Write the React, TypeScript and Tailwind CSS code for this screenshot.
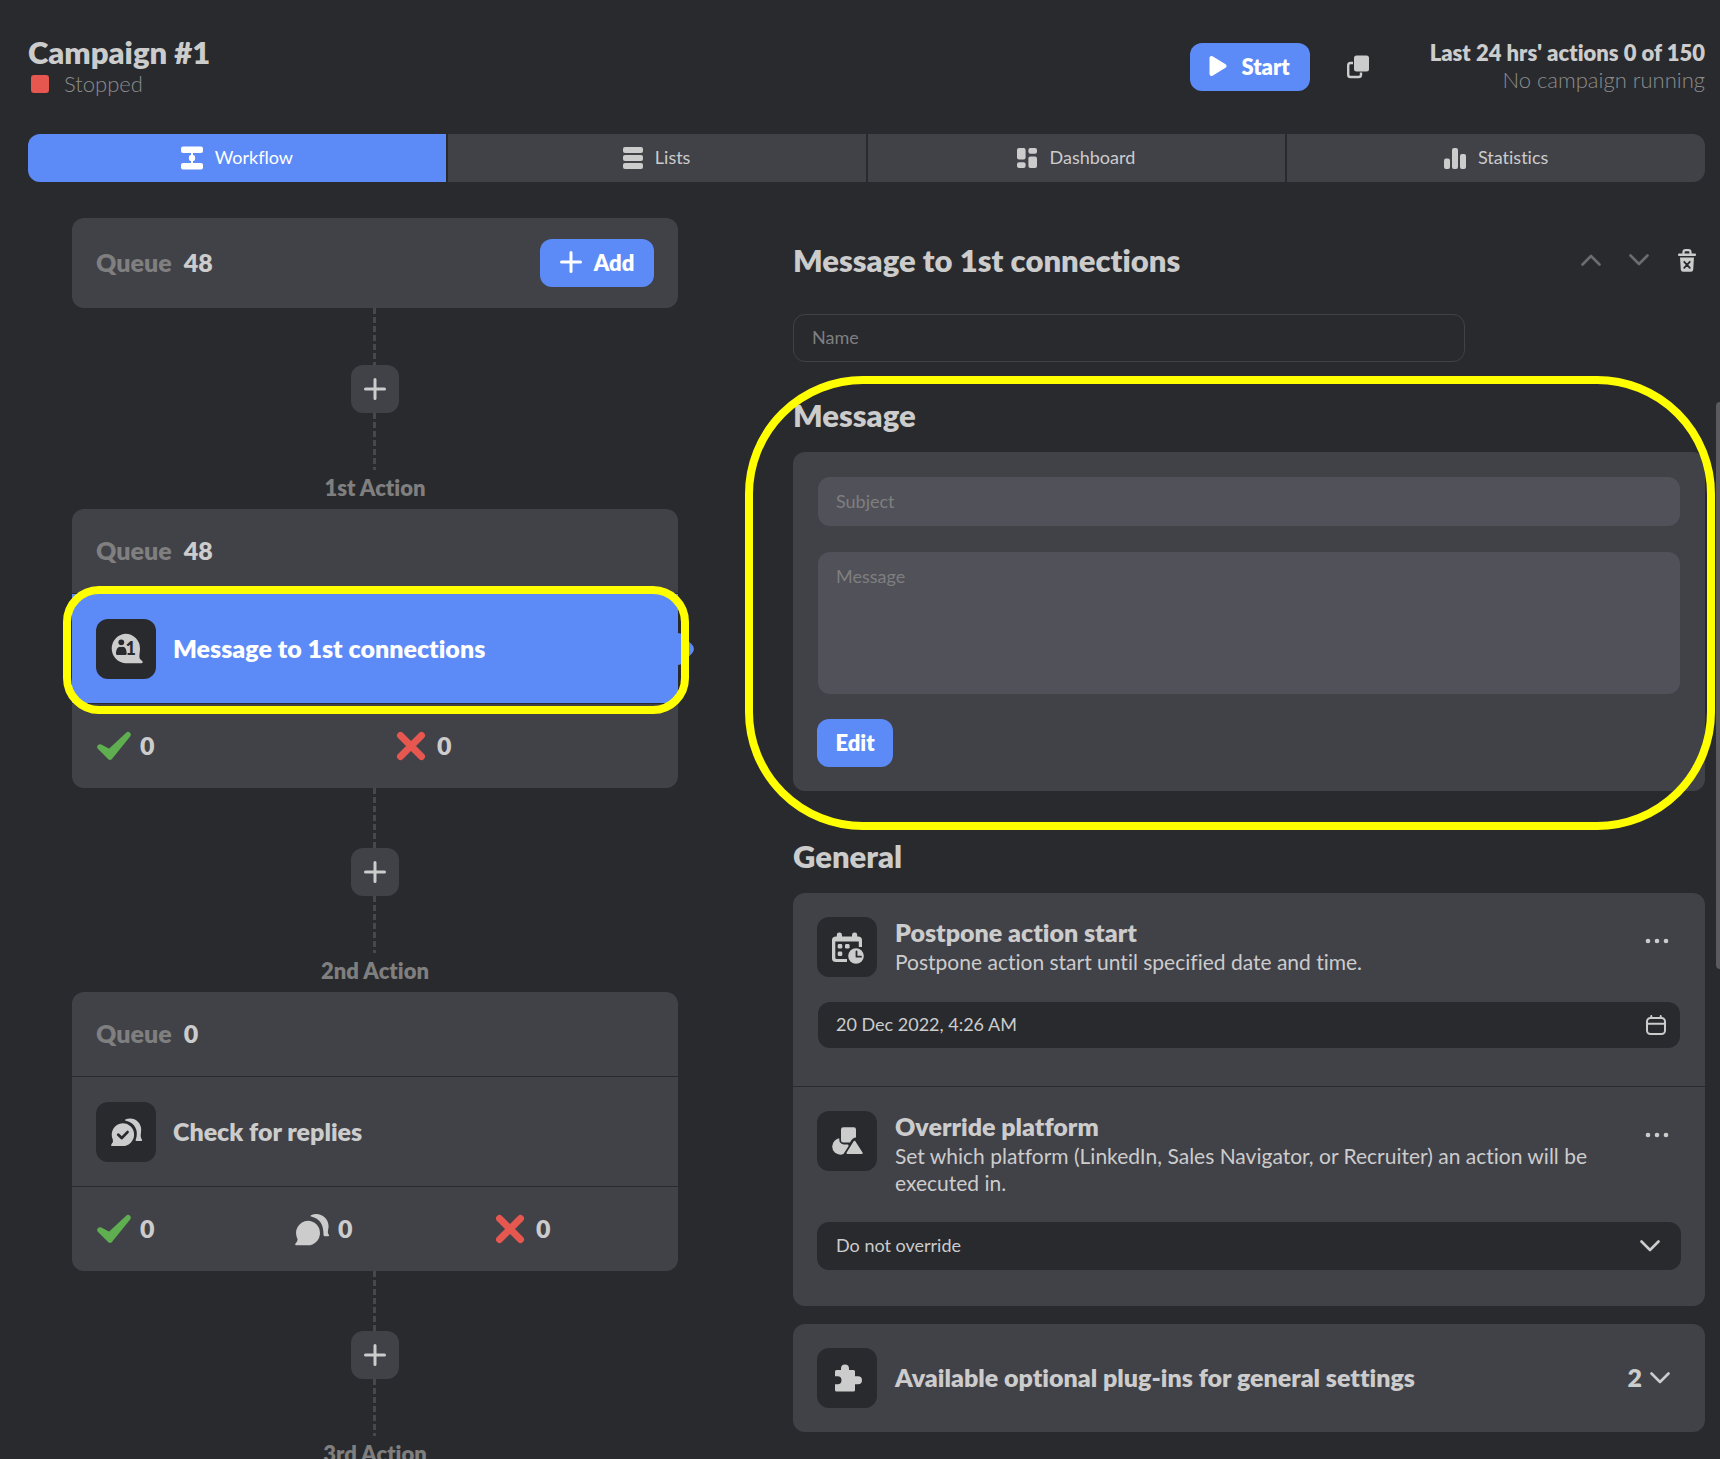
import React from "react";

type IconProps = { className?: string };

const PlusIcon = ({ className = "" }: IconProps) => (
  <svg viewBox="0 0 22 22" className={`size-[22px] shrink-0 ${className}`} fill="none" stroke="currentColor" strokeWidth="3" strokeLinecap="round" aria-hidden>
    <path d="M11 1.5v19M1.5 11h19" />
  </svg>
);

const ChevronIcon = ({ className = "" }: IconProps) => (
  <svg viewBox="0 0 20 12" className={`h-3 w-5 shrink-0 ${className}`} fill="none" stroke="currentColor" strokeWidth="2.6" strokeLinecap="round" strokeLinejoin="round" aria-hidden>
    <path d="M1.5 1.5l8.500 8.500 8.500-8.500" />
  </svg>
);

const WorkflowIcon = () => (
  <svg viewBox="0 0 22 24" className="h-6 w-[22px]" fill="currentColor" aria-hidden>
    <rect x="0" y="0.500" width="22" height="6.500" rx="2" />
    <rect x="0" y="17" width="22" height="6.500" rx="2" />
    <rect x="10" y="6" width="2" height="12" />
    <circle cx="11" cy="12" r="3.200" />
  </svg>
);

const ListsIcon = () => (
  <svg viewBox="0 0 20 22" className="h-[22px] w-5" fill="currentColor" aria-hidden>
    <rect y="0" width="20" height="6" rx="2" />
    <rect y="8" width="20" height="6" rx="2" />
    <rect y="16" width="20" height="6" rx="2" />
  </svg>
);

const DashboardIcon = () => (
  <svg viewBox="0 0 20 20" className="size-5" fill="currentColor" aria-hidden>
    <rect x="0" y="0" width="8.600" height="11.400" rx="2" />
    <rect x="0" y="14.200" width="8.600" height="5.800" rx="2" />
    <rect x="11.400" y="0" width="8.600" height="5.800" rx="2" />
    <rect x="11.400" y="8.600" width="8.600" height="11.400" rx="2" />
  </svg>
);

const StatisticsIcon = () => (
  <svg viewBox="0 0 22 21" className="h-[21px] w-[22px]" fill="currentColor" aria-hidden>
    <rect x="0" y="10.500" width="6" height="10.500" rx="2" />
    <rect x="8" y="0" width="6" height="21" rx="2" />
    <rect x="16" y="6" width="6" height="15" rx="2" />
  </svg>
);

const CopyIcon = () => (
  <svg viewBox="0 0 22 24" className="h-6 w-[22px]" aria-hidden>
    <path d="M6 8H3.500Q1.200 8 1.200 10.300V19.700Q1.200 22 3.500 22H11.500Q14 22 14 19.700V17.500" fill="none" stroke="currentColor" strokeWidth="2.400" />
    <rect x="7" y="0.500" width="15" height="16" rx="2.500" fill="currentColor" />
  </svg>
);

const TrashIcon = () => (
  <svg viewBox="0 0 18 23" className="h-[23px] w-[18px]" aria-hidden>
    <rect x="0" y="4.500" width="18" height="2.400" rx="1" fill="currentColor" />
    <path d="M5.500 5V3.200Q5.500 1.200 7.500 1.200h3Q12.500 1.200 12.500 3.200V5" fill="none" stroke="currentColor" strokeWidth="2.200" />
    <path d="M2 8.500H16L15.200 20.600Q15 22.800 13 22.800H5Q3 22.800 2.800 20.600Z" fill="currentColor" />
    <path d="M6.200 12.800l5.600 6M11.800 12.800l-5.600 6" stroke="#292a2e" strokeWidth="1.800" strokeLinecap="round" />
  </svg>
);

const CheckIcon = () => (
  <svg viewBox="0 0 36 30" className="h-[30px] w-9 text-[#5fae50]" fill="currentColor" stroke="currentColor" strokeWidth="5.500" strokeLinejoin="round" aria-label="Succeeded" role="img">
    <path d="M4 16l9.500 5L32 3.700 14 26Z" />
  </svg>
);

const CrossIcon = () => (
  <svg viewBox="0 0 36 30" className="h-[30px] w-9 text-[#e5574f]" fill="none" stroke="currentColor" strokeLinecap="round" aria-label="Failed" role="img">
    <path d="M7.500 4.500l21 21M28.500 4.500l-21 21" strokeWidth="7" />
  </svg>
);

const RepliesIcon = () => (
  <svg viewBox="0 0 36 34" className="h-[34px] w-9" fill="currentColor" aria-label="Replied" role="img">
    <path d="M13.700 8.700a12.200 12.200 0 1 1 0 24.600H2.200Q0.500 33.300 1.500 31.500Q4.300 29 3.300 26.500A12.400 12.400 0 0 1 13.700 8.700Z" />
    <path d="M17 3.200C25 -0.500 34.600 5 34.600 14.300C34.600 17.500 33 20 34.500 22.200Q36 24.200 34 24.200H30.500Q29.500 24.200 29.500 22.500C29.500 12.500 26 6.500 17 4.500Q16 4 17 3.200Z" />
  </svg>
);

const MessageFirstIcon = () => (
  <svg viewBox="0 0 60 60" className="size-[60px]" fill="currentColor" aria-hidden>
    <path d="M29.300 14.700A14.800 14.800 0 0 1 44 29.500C44 34 42.400 38.500 44.500 40.600L46.500 42.300Q47.300 44.200 45.500 44.200H29.300A14.800 14.800 0 0 1 29.300 14.700Z" />
    <g fill="#292a2e">
      <circle cx="25.300" cy="23.300" r="2.900" />
      <path d="M20 34.500C20 30 22 28 24 27.700Q25.300 28.500 26.700 27.700C29 28 30.700 30 30.700 34.500Q30.700 36 29.200 36H21.500Q20 36 20 34.500Z" />
      <text x="29.500" y="35.600" fontSize="18" fontWeight="900" fontFamily="Lato, sans-serif">1</text>
    </g>
  </svg>
);

const CheckRepliesIcon = () => (
  <svg viewBox="0 0 60 60" className="size-[60px]" fill="currentColor" aria-hidden>
    <path d="M26.700 21.200a11.400 11.400 0 1 1 0 22.800H16Q14.500 44 15.300 42.400Q17.800 40 16.800 37.500A11.400 11.400 0 0 1 26.700 21.200Z" />
    <path d="M29.300 17.500C37 14 45.200 19.500 45.200 27.500C45.200 31 44 34 45.300 36.500Q47 39 45.300 39H40.200Q39.200 39 39.800 37.500C43 29 39 20.500 30 18.700Q28 18.500 29.300 17.500Z" />
    <path d="M22.300 32.800l3.400 3.300 5.800-6" fill="none" stroke="#292a2e" strokeWidth="2.800" strokeLinecap="round" strokeLinejoin="round" />
  </svg>
);

const CalendarClockIcon = () => (
  <svg viewBox="0 0 60 60" className="size-[60px]" fill="currentColor" aria-hidden>
    <path d="M19 19.500H41Q45 19.500 45 23V30H41.800V24.500H18.300V40.500Q18.300 42 19.800 42H30V45H19Q15 45 15 41.500V23Q15 19.500 19 19.500Z" />
    <rect x="19.800" y="15.500" width="5.200" height="7" rx="2.400" />
    <rect x="35" y="15.500" width="5.200" height="7" rx="2.400" />
    <rect x="20.700" y="27" width="4.600" height="4.600" rx="1.400" />
    <rect x="28" y="27" width="4.600" height="4.600" rx="1.400" />
    <rect x="20.700" y="34.500" width="4.600" height="4.600" rx="1.400" />
    <circle cx="39" cy="39" r="9.200" fill="#292a2e" />
    <circle cx="39" cy="39" r="7.800" />
    <path d="M39.500 34.500V39.700H44" fill="none" stroke="#292a2e" strokeWidth="1.800" strokeLinecap="round" strokeLinejoin="round" />
  </svg>
);

const ShapesIcon = () => (
  <svg viewBox="0 0 60 60" className="size-[60px]" fill="currentColor" aria-hidden>
    <circle cx="23.500" cy="35.500" r="8.300" />
    <path d="M37.500 30.500l8.600 13.300h-17.200z" stroke="#292a2e" strokeWidth="5" strokeLinejoin="round" fill="#292a2e" />
    <rect x="22.300" y="14.700" width="18.300" height="18.700" rx="4.500" fill="#292a2e" />
    <path d="M37.500 30.700l7.200 11.400h-14.200z" stroke="currentColor" strokeWidth="2" strokeLinejoin="round" />
    <path d="M26.300 16.300H36.800Q39 16.300 39 18.500V26.500Q35.500 26.500 33 31.500H26.300Q24 31.500 24 29.300V18.500Q24 16.300 26.300 16.300Z" />
  </svg>
);

const PuzzleIcon = () => (
  <svg viewBox="0 0 60 60" className="size-[60px]" fill="currentColor" aria-hidden>
    <path d="M19.500 22H24V20.500A4 4 0 0 1 32 20.500V22H36.500Q38 22 38 23.500V28.300H41A3.900 3.900 0 0 1 41 36.300H38V42Q38 43.500 36.500 43.500H19.500Q18 43.500 18 42V36.300H20.500A3.900 3.900 0 0 0 20.500 28.300H18V23.500Q18 22 19.500 22Z" />
  </svg>
);

const CalendarIcon = () => (
  <svg viewBox="0 0 20 20" className="size-5" fill="none" stroke="currentColor" strokeWidth="2" strokeLinecap="round" aria-hidden>
    <rect x="1" y="3" width="18" height="16" rx="3.500" />
    <path d="M1 8.700h18M5.300 1v2M14.700 1v2" />
  </svg>
);

const DotsIcon = () => (
  <svg viewBox="0 0 24 6" className="h-1.5 w-6" fill="currentColor" aria-hidden>
    <circle cx="3" cy="3" r="2.300" />
    <circle cx="12" cy="3" r="2.300" />
    <circle cx="21" cy="3" r="2.300" />
  </svg>
);

const IconTile = ({ children }: { children: React.ReactNode }) => (
  <span className="flex size-[60px] shrink-0 items-center justify-center overflow-hidden rounded-xl bg-[#292a2e] text-[#cccccc]">{children}</span>
);

const dashes =
  "mr-px w-[3px] bg-[repeating-linear-gradient(to_bottom,#47474d_0px,#47474d_6px,transparent_6px,transparent_9px)]";

const Connector = ({ label, first = false }: { label: string; first?: boolean }) => (
  <div className="flex flex-col items-center">
    <div className={`${first ? "h-[57px]" : "h-[60px]"} ${dashes}`} />
    <button type="button" aria-label={`Add step before ${label}`} className="flex size-12 items-center justify-center rounded-xl bg-[#414148]">
      <PlusIcon />
    </button>
    <div className={`h-[57px] ${dashes}`} />
    <h3 className="h-[39px] text-[22px] leading-9 font-extrabold text-[#7f7f7f]">{label}</h3>
  </div>
);

const Queue = ({ count }: { count: number }) => (
  <p className="flex gap-3 text-[25px] font-extrabold">
    <span className="text-[#7f7f7f]">Queue</span>
    <span>{count}</span>
  </p>
);

const Stat = ({ icon, value }: { icon: React.ReactNode; value: number }) => (
  <div className="flex items-center gap-2 text-[25px] font-extrabold">
    {icon}
    <span>{value}</span>
  </div>
);

const tabs = [
  { label: "Workflow", icon: <WorkflowIcon />, active: true },
  { label: "Lists", icon: <ListsIcon />, active: false },
  { label: "Dashboard", icon: <DashboardIcon />, active: false },
  { label: "Statistics", icon: <StatisticsIcon />, active: false },
];

const Header = () => (
  <header className="flex items-start justify-between pt-[35px]">
    <div>
      <h1 className="text-[31px] leading-[35px] font-extrabold">Campaign #1</h1>
      <p className="flex items-center gap-[15px] pl-[3px] text-[22px] leading-7 font-light text-[#8c8c8c]">
        <span className="size-[18px] rounded-[3px] bg-[#e5574f]" />
        Stopped
      </p>
    </div>
    <div className="flex">
      <button type="button" className="mt-2 flex h-12 w-[120px] items-center justify-center gap-3.5 rounded-xl bg-[#5c8af7] pb-0.5 text-[22px] font-extrabold text-white">
        <svg viewBox="0 0 18 22" className="h-[22px] w-[18px]" fill="currentColor" stroke="currentColor" strokeWidth="4" strokeLinejoin="round" aria-hidden>
          <path d="M2.500 3v16L15.500 11Z" />
        </svg>
        Start
      </button>
      <button type="button" aria-label="Duplicate campaign" className="mt-2 ml-6 flex size-12 items-center justify-center">
        <CopyIcon />
      </button>
      <div className="ml-12 pt-1 text-right text-[22px] leading-[27px]">
        <p className="font-extrabold">Last 24 hrs&apos; actions 0 of 150</p>
        <p className="font-light text-[#8c8c8c]">No campaign running</p>
      </div>
    </div>
  </header>
);

const Workflow = () => (
  <section aria-label="Workflow" className="px-11">
    <div className="flex h-[90px] items-center justify-between rounded-xl bg-[#414148] px-6">
      <Queue count={48} />
      <button type="button" className="flex h-12 w-[114px] items-center justify-center gap-3 rounded-xl bg-[#5c8af7] pb-0.5 text-[22px] font-extrabold text-white">
        <PlusIcon />
        Add
      </button>
    </div>

    <Connector label="1st Action" first />

    <article className="rounded-xl bg-[#414148]">
      <div className="flex h-[84px] items-center px-6">
        <Queue count={48} />
      </div>
      <div className="relative border-y border-[#292a2e] bg-[#5c8af7]">
        <span className="absolute top-1/2 -right-[13px] size-[26px] -translate-y-1/2 rotate-45 rounded-md bg-[#5c8af7]" />
        <button type="button" className="relative flex h-[109px] w-full items-center gap-[17px] px-6 text-left text-[25px] font-extrabold text-white">
          <IconTile><MessageFirstIcon /></IconTile>
          Message to 1st connections
        </button>
        <span className="pointer-events-none absolute -top-2 -right-[11px] -bottom-[11px] -left-[9px] rounded-[36px] border-8 border-[#ffff00]" />
      </div>
      <div className="grid h-[84px] grid-cols-2 items-center gap-9 px-6">
        <Stat icon={<CheckIcon />} value={0} />
        <Stat icon={<CrossIcon />} value={0} />
      </div>
    </article>

    <Connector label="2nd Action" />

    <article className="rounded-xl bg-[#414148]">
      <div className="flex h-[84px] items-center px-6">
        <Queue count={0} />
      </div>
      <button type="button" className="flex h-[111px] w-full items-center gap-[17px] border-y border-[#292a2e] px-6 text-left text-[25px] font-extrabold">
        <IconTile><CheckRepliesIcon /></IconTile>
        Check for replies
      </button>
      <div className="grid h-[84px] grid-cols-3 items-center gap-9 px-6">
        <Stat icon={<CheckIcon />} value={0} />
        <Stat icon={<RepliesIcon />} value={0} />
        <Stat icon={<CrossIcon />} value={0} />
      </div>
    </article>

    <Connector label="3rd Action" />
  </section>
);

const SettingHeader = ({ icon, title, text }: { icon: React.ReactNode; title: string; text: string }) => (
  <div className="flex items-start">
    <IconTile>{icon}</IconTile>
    <div className="ml-[18px] flex-1">
      <h3 className="text-[25px] leading-[30px] font-extrabold">{title}</h3>
      <p className="mt-px text-[21px] leading-[27px]">{text}</p>
    </div>
    <button type="button" aria-label={`${title} options`} className="flex size-12 shrink-0 items-center justify-center">
      <DotsIcon />
    </button>
  </div>
);

const Settings = () => (
  <section aria-label="Action settings" className="pl-[71px]">
    <div className="flex items-center justify-between pt-[18px]">
      <h2 className="text-[31px] leading-12 font-extrabold">Message to 1st connections</h2>
      <div className="-mr-1.5 flex">
        <button type="button" aria-label="Move up" className="flex size-12 items-center justify-center text-[#6c6c70]">
          <ChevronIcon className="rotate-180" />
        </button>
        <button type="button" aria-label="Move down" className="flex size-12 items-center justify-center text-[#6c6c70]">
          <ChevronIcon />
        </button>
        <button type="button" aria-label="Delete action" className="flex size-12 items-center justify-center">
          <TrashIcon />
        </button>
      </div>
    </div>

    <input aria-label="Name" placeholder="Name" className="mt-[30px] h-12 w-[672px] max-w-full rounded-xl border border-[#414148] bg-transparent px-[18px] pb-0.5 text-lg outline-none placeholder:text-[#7f7f7f]" />

    <div className="relative mt-[35px]">
      <h2 className="text-[31px] leading-9 font-extrabold">Message</h2>
      <div className="mt-[19px] rounded-xl bg-[#414148] p-6">
        <input aria-label="Subject" placeholder="Subject" className="mx-px mt-px block h-[49px] w-[calc(100%-2px)] rounded-xl bg-[#51515a] px-[18px] pb-0.5 text-lg outline-none placeholder:text-[#7f7f7f]" />
        <textarea aria-label="Message" placeholder="Message" className="mx-px mt-[26px] block h-[142px] w-[calc(100%-2px)] resize-none rounded-xl bg-[#51515a] px-[18px] py-3 text-lg leading-6 outline-none placeholder:text-[#7f7f7f]" />
        <button type="button" className="mt-[25px] h-12 w-[76px] rounded-xl bg-[#5c8af7] pb-0.5 text-[22px] font-extrabold text-white">Edit</button>
      </div>
      <span className="pointer-events-none absolute -top-[21px] -right-[10px] -bottom-[39px] -left-12 rounded-[118px] border-8 border-[#ffff00]" />
    </div>

    <h2 className="mt-[47px] text-[31px] leading-9 font-extrabold">General</h2>
    <div className="mt-[19px] rounded-xl bg-[#414148]">
      <div className="px-6 pt-6 pb-[38px]">
        <SettingHeader icon={<CalendarClockIcon />} title="Postpone action start" text="Postpone action start until specified date and time." />
        <div className="relative mx-px mt-[25px]">
          <input aria-label="Start date and time" defaultValue="20 Dec 2022, 4:26 AM" className="block h-[46px] w-full rounded-xl bg-[#292a2e] px-[18px] pb-0.5 text-lg outline-none" />
          <button type="button" aria-label="Open calendar" className="absolute inset-y-0 right-3.5 flex items-center">
            <CalendarIcon />
          </button>
        </div>
      </div>
      <div className="border-t border-[#292a2e] px-6 pt-6 pb-9">
        <SettingHeader icon={<ShapesIcon />} title="Override platform" text="Set which platform (LinkedIn, Sales Navigator, or Recruiter) an action will be executed in." />
        <div className="relative mt-[26px]">
          <select aria-label="Platform" className="block h-12 w-full appearance-none rounded-xl bg-[#292a2e] px-[19px] pb-0.5 text-lg outline-none">
            <option>Do not override</option>
          </select>
          <ChevronIcon className="pointer-events-none absolute top-[18px] right-[21px]" />
        </div>
      </div>
    </div>

    <button type="button" className="mt-[18px] flex h-[108px] w-full items-center rounded-xl bg-[#414148] px-6 text-left text-[25px] font-extrabold">
      <IconTile><PuzzleIcon /></IconTile>
      <span className="ml-[18px] flex-1">Available optional plug-ins for general settings</span>
      <span>2</span>
      <ChevronIcon className="mr-[11px] ml-2" />
    </button>
  </section>
);

export default function App() {
  return (
    <div className="relative h-screen overflow-hidden bg-[#292a2e] pr-[15px] pl-7 font-['Lato',sans-serif] text-[#cccccc] [font-variant-ligatures:none]">
      <Header />
      <nav aria-label="Campaign sections" className="mt-9 grid grid-cols-4 gap-0.5 overflow-hidden rounded-xl">
        {tabs.map((tab) => (
          <button
            key={tab.label}
            type="button"
            className={`flex h-12 items-center justify-center gap-3 text-lg ${tab.active ? "bg-[#5c8af7] text-white" : "bg-[#414148]"}`}
          >
            {tab.icon}
            <span className="pb-0.5">{tab.label}</span>
          </button>
        ))}
      </nav>
      <main className="mt-9 grid grid-cols-[694fr_983fr] items-start">
        <Workflow />
        <Settings />
      </main>
      <div className="absolute top-[402px] right-0 h-[567px] w-1 rounded-l-sm bg-[#5a5a5f]" />
    </div>
  );
}
